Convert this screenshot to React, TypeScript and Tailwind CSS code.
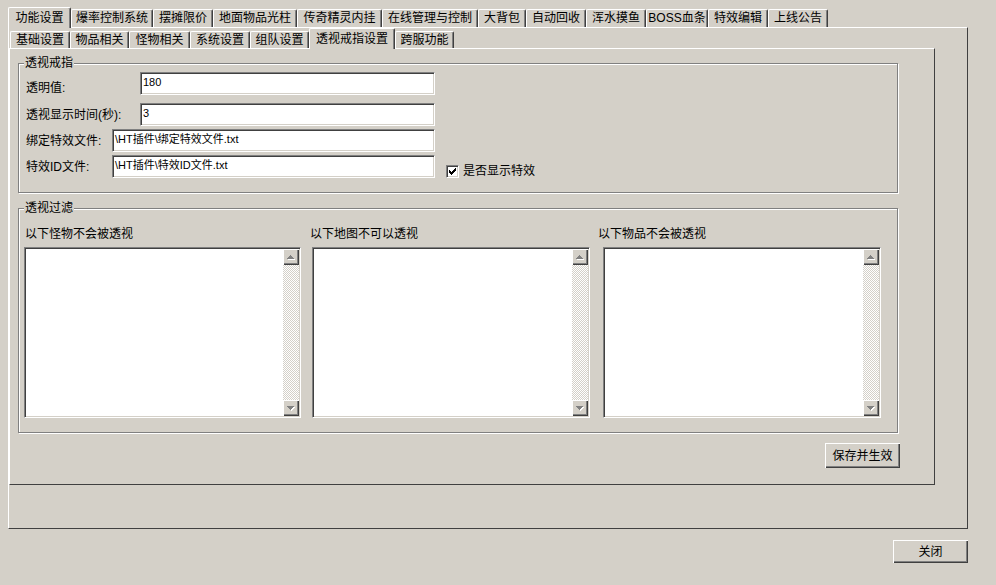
import type { ReactNode } from 'react';

const outerTabs: [string, number][] = [
  ['功能设置', 63],
  ['爆率控制系统', 82],
  ['摆摊限价', 60],
  ['地面物品光柱', 84],
  ['传奇精灵内挂', 85],
  ['在线管理与控制', 96],
  ['大背包', 48],
  ['自动回收', 60],
  ['浑水摸鱼', 60],
  ['BOSS血条', 62],
  ['特效编辑', 60],
  ['上线公告', 60],
];

const innerTabs: [string, number][] = [
  ['基础设置', 60],
  ['物品相关', 59],
  ['怪物相关', 61],
  ['系统设置', 60],
  ['组队设置', 59],
  ['透视戒指设置', 86],
  ['跨服功能', 59],
];

// classic 7x7 check mark, one [x, y, w] run per row
const checkRuns: [number, number, number][] = [
  [6, 0, 1],
  [5, 1, 2],
  [0, 2, 1],
  [4, 2, 3],
  [0, 3, 2],
  [3, 3, 3],
  [0, 4, 5],
  [1, 5, 3],
  [2, 6, 1],
];

const sunken =
  'border border-t-[#808080] border-l-[#808080] border-r-white border-b-white bg-white shadow-[inset_1px_1px_0_#404040,inset_-1px_-1px_0_#d4d0c8]';
const raised =
  'bg-[#d4d0c8] shadow-[inset_1px_1px_0_#ffffff,inset_-1px_-1px_0_#404040,inset_-2px_-2px_0_#808080]';

function Tab({ label, width, selected, small }: { label: string; width: number; selected: boolean; small?: boolean }) {
  const height = selected ? 'h-[21px] -mb-px relative z-10' : small ? 'h-[17px]' : 'h-[18px]';
  return (
    <div
      className={`flex shrink-0 items-center justify-center rounded-t-[2px] border-t border-l border-t-white border-l-white border-r border-r-[#404040] bg-[#d4d0c8] pb-[1px] leading-[14px] shadow-[inset_-1px_0_0_#808080] ${height}`}
      style={{ width }}
    >
      {label}
    </div>
  );
}

function GroupBox({ title, className, children }: { title: string; className: string; children: ReactNode }) {
  return (
    <div className={`relative w-[880px] border border-[#808080] shadow-[1px_1px_0_#ffffff,inset_1px_1px_0_#ffffff] ${className}`}>
      <span className="absolute -top-[8px] left-[5px] bg-[#d4d0c8] px-[1px] leading-[14px]">{title}</span>
      {children}
    </div>
  );
}

function TextBox({ value, width, height = 23 }: { value: string; width: number; height?: number }) {
  return (
    <div className={`shrink-0 pl-[2px] pt-[3px] text-[11px] leading-[13px] ${sunken}`} style={{ width, height }}>
      {value}
    </div>
  );
}

function Arrow({ down }: { down?: boolean }) {
  const rows = down ? [9, 8, 7, 6].map((y, i) => [y, i]) : [6, 7, 8, 9].map((y, i) => [y, i]);
  return (
    <div className={`h-[16px] w-[16px] shrink-0 ${raised}`}>
      <svg width="16" height="16" viewBox="0 0 16 16" shapeRendering="crispEdges">
        {rows.map(([y, i]) => (
          <rect key={`w${y}`} x={8 - i} y={y + 1} width={i * 2 + 1} height={1} fill="#ffffff" />
        ))}
        {rows.map(([y, i]) => (
          <rect key={`g${y}`} x={7 - i} y={y} width={i * 2 + 1} height={1} fill="#808080" />
        ))}
      </svg>
    </div>
  );
}

function ListBox({ width }: { width: number }) {
  return (
    <div className={`flex h-[171px] justify-end p-px ${sunken}`} style={{ width }}>
      <div className="flex w-[16px] flex-col">
        <Arrow />
        <div className="flex-1 bg-[image:repeating-conic-gradient(#ffffff_0%_25%,#d4d0c8_0%_50%)] bg-[length:2px_2px]" />
        <Arrow down />
      </div>
    </div>
  );
}

function Button({ label, className }: { label: string; className: string }) {
  return (
    <button type="button" className={`flex items-center justify-center leading-[14px] ${raised} ${className}`}>
      {label}
    </button>
  );
}

export default function App() {
  return (
    <div className="h-[585px] w-[996px] overflow-hidden bg-[#d4d0c8] pl-[8px] pt-[7px] font-['Liberation_Sans','Noto_Sans_CJK_SC',sans-serif] text-[12px] text-black">
      <div className="w-[960px]">
        <div className="flex h-[20px] items-end">
          {outerTabs.map(([label, width], i) => (
            <Tab key={label} label={label} width={width} selected={i === 0} />
          ))}
        </div>

        <div className="h-[502px] border border-t-white border-l-white border-r-[#404040] border-b-[#404040] bg-[#d4d0c8]">
          <div className="flex h-[20px] items-end pl-[1px]">
            {innerTabs.map(([label, width], i) => (
              <Tab key={label} label={label} width={width} selected={i === 5} small />
            ))}
          </div>

          <div className="h-[437px] w-[926px] border border-t-white border-l-white border-r-[#404040] border-b-[#404040] pl-[8px] pt-[14px]">
            <GroupBox title="透视戒指" className="h-[130px] pl-[7px] pt-[8px]">
              <div className="flex h-[23px] items-end">
                <span className="w-[114px] leading-[14px]">透明值:</span>
                <TextBox value="180" width={295} />
              </div>
              <div className="mt-[8px] flex h-[23px] items-center">
                <span className="w-[114px] leading-[14px]">透视显示时间(秒):</span>
                <TextBox value="3" width={295} />
              </div>
              <div className="mt-[3px] flex h-[23px] items-center">
                <span className="w-[86px] leading-[14px]">绑定特效文件:</span>
                <TextBox value="\HT插件\绑定特效文件.txt" width={323} />
              </div>
              <div className="mt-[3px] flex h-[23px] items-center">
                <span className="w-[86px] leading-[14px]">特效ID文件:</span>
                <TextBox value="\HT插件\特效ID文件.txt" width={323} />
                <div className="ml-[11px] flex items-center self-end">
                  <div className={`flex h-[13px] w-[13px] items-center justify-center ${sunken}`}>
                    <svg width="7" height="7" viewBox="0 0 7 7" shapeRendering="crispEdges">
                      {checkRuns.map(([x, y, w]) => (
                        <rect key={`${x}-${y}`} x={x} y={y} width={w} height={1} fill="#000000" />
                      ))}
                    </svg>
                  </div>
                  <span className="ml-[4px] leading-[14px]">是否显示特效</span>
                </div>
              </div>
            </GroupBox>

            <GroupBox title="透视过滤" className="mt-[15px] h-[225px] pl-[5px] pt-[18px]">
              <div className="flex">
                <div className="flex w-[277px] flex-col">
                  <span className="ml-[1px] leading-[14px]">以下怪物不会被透视</span>
                  <div className="mt-[6px]">
                    <ListBox width={277} />
                  </div>
                </div>
                <div className="ml-[9px] flex w-[280px] flex-col">
                  <span className="leading-[14px]">以下地图不可以透视</span>
                  <div className="ml-[2px] mt-[6px]">
                    <ListBox width={278} />
                  </div>
                </div>
                <div className="ml-[8px] flex w-[283px] flex-col">
                  <span className="leading-[14px]">以下物品不会被透视</span>
                  <div className="ml-[5px] mt-[6px]">
                    <ListBox width={278} />
                  </div>
                </div>
              </div>
            </GroupBox>

            <div className="mt-[10px] flex w-[882px] justify-end">
              <Button label="保存并生效" className="h-[25px] w-[75px]" />
            </div>
          </div>
        </div>

        <div className="mt-[11px] flex justify-end">
          <Button label="关闭" className="h-[23px] w-[75px]" />
        </div>
      </div>
    </div>
  );
}
